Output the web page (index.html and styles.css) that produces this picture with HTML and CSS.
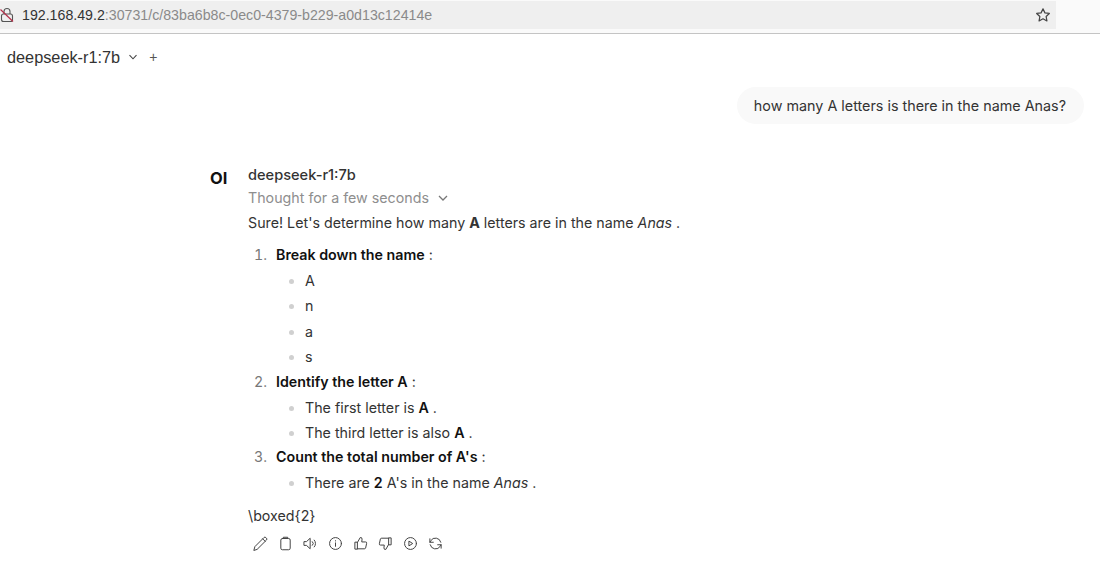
FILE: index.html
```html
<!DOCTYPE html>
<html lang="en">
<head>
    <meta charset="UTF-8">
    <title>deepseek-r1:7b</title>
    <link rel="stylesheet" href="styles.css">
</head>
<body>
    <!-- Browser address bar -->
    <div class="browser-bar">
        <div class="url-box">
            <svg class="lock" width="14" height="16" viewBox="0 0 14 16" fill="none" stroke="#555" stroke-width="1.1">
                <path d="M4 7V4.5a3 3 0 0 1 6 0V7"/>
                <rect x="1.5" y="7" width="11" height="7.5" rx="2"/>
                <path d="M0.5 2.5L13 14.5" stroke="#b3314a" stroke-width="1.2"/>
            </svg>
            <span class="host">192.168.49.2</span><span class="path">:30731/c/83ba6b8c-0ec0-4379-b229-a0d13c12414e</span>
            <svg class="star" width="16" height="16" viewBox="0 0 24 24" fill="none" stroke="#444" stroke-width="1.8" stroke-linejoin="round">
                <path d="M12 2.8l2.9 6 6.6.9-4.8 4.6 1.2 6.6-5.9-3.2-5.9 3.2 1.2-6.6L2.500 9.700l6.600-.9z"/>
            </svg>
        </div>
    </div>

    <div class="model-bar">
        <span class="model-name">deepseek-r1:7b</span>
        <svg class="chev" width="10" height="10" viewBox="0 0 10 10" fill="none" stroke="#444" stroke-width="1.1"><path d="M1.500 3.200L5 6.800l3.500-3.600"/></svg>
        <span class="plus">+</span>
    </div>

    <div class="user-row">
        <div class="user-bubble">how many A letters is there in the name Anas?</div>
    </div>

    <div class="reply">
        <div class="logo">OI</div>
        <div class="reply-body">
            <div class="reply-name">deepseek-r1:7b</div>
            <div class="thought">Thought for a few seconds
                <svg width="12" height="12" viewBox="0 0 12 12" fill="none" stroke="#777" stroke-width="1.3"><path d="M2 4l4 4 4-4"/></svg>
            </div>
            <p class="intro">Sure! Let's determine how many <b>A</b> letters are in the name <i>Anas</i> .</p>
            <ol class="steps">
                <li><b>Break down the name</b> :
                    <ul class="letters">
                        <li>A</li>
                        <li>n</li>
                        <li>a</li>
                        <li>s</li>
                    </ul>
                </li>
                <li><b>Identify the letter A</b> :
                    <ul>
                        <li>The first letter is <b>A</b> .</li>
                        <li>The third letter is also <b>A</b> .</li>
                    </ul>
                </li>
                <li><b>Count the total number of A's</b> :
                    <ul>
                        <li>There are <b>2</b> A's in the name <i>Anas</i> .</li>
                    </ul>
                </li>
            </ol>
            <p class="boxed">\boxed{2}</p>
            <div class="actions">
                <svg viewBox="0 0 24 24"><path d="M1.500 22.500l1.500-5.500L17.500 2.500a2.200 2.200 0 0 1 3.100 0l.9.900a2.200 2.200 0 0 1 0 3.100L7 21z M15.500 4.500l4 4"/></svg>
                <svg viewBox="0 0 24 24"><rect x="4.500" y="4" width="15" height="18" rx="2.500"/><path d="M8.500 4V2h7v2"/></svg>
                <svg viewBox="0 0 24 24"><path d="M11 4L5.500 9H1.500v6h4l5.500 5z M15 9a4 4 0 0 1 0 6 M18 6.500a8 8 0 0 1 0 11"/></svg>
                <svg viewBox="0 0 24 24"><circle cx="12" cy="12" r="9.500"/><path d="M12 11v5.500 M12 7.500v.5"/></svg>
                <svg viewBox="0 0 24 24"><path d="M7 10.500v10.500H3V10.500z M7 10.500l4.500-8a2.500 2.500 0 0 1 3 2.500l-.5 4.500h6a1.800 1.800 0 0 1 1.800 2.200l-1.600 7.500a2 2 0 0 1-2 1.300H7"/></svg>
                <svg viewBox="0 0 24 24"><path d="M17 13.500V3h4v10.500z M17 13.500l-4.500 8a2.500 2.500 0 0 1-3-2.500l.5-4.500H4a1.800 1.800 0 0 1-1.800-2.200l1.600-7.500a2 2 0 0 1 2-1.300H17"/></svg>
                <svg viewBox="0 0 24 24"><circle cx="12" cy="12" r="9.500"/><path d="M10 8.500l5.500 3.500-5.500 3.500z"/></svg>
                <svg viewBox="0 0 24 24"><path d="M20.500 10A8.800 8.800 0 0 0 4.500 7.500L3 10 M3.500 14a8.800 8.800 0 0 0 16 2.500L21 14 M3 4.500V10h5.500 M21 19.500V14h-5.500"/></svg>
            </div>
        </div>
    </div>
</body>
</html>
```

FILE: styles.css
```css
body {
    margin: 0;
    height: 574px;
    overflow: hidden;
    background: #fff;
    font-family: Inter, "Liberation Sans", sans-serif;
    font-size: 14.25px;
    color: #333;
}

/* Browser address bar */
.browser-bar {
    height: 33px;
    border-bottom: 1px solid #c4c4c4;
    background: #fafafa;
}
.url-box {
    width: 1056px;
    height: 28px;
    background: #efefef;
    display: flex;
    align-items: center;
    font-family: "Liberation Sans", sans-serif;
    font-size: 14.2px;
    position: relative;
    top: 1px;
}
.lock {
    margin: 0 8px 0 0;
    flex: none;
}
.host {
    color: #333;
}
.path {
    color: #8a8a8a;
}
.star {
    margin-left: auto;
    margin-right: 5px;
}

/* Model selector */
.model-bar {
    display: flex;
    align-items: center;
    height: 46px;
    padding-left: 7px;
    font-size: 16px;
    color: #333;
    font-family: "Liberation Sans", sans-serif;
}
.model-name {
    font-size: 16.3px;
}
.chev {
    margin-left: 8px;
}
.plus {
    margin-left: 11px;
    font-size: 14px;
    color: #555;
}

/* User message */
.user-row {
    display: flex;
    justify-content: flex-end;
    padding-right: 16px;
    margin-top: 7px;
}
.user-bubble {
    background: #f9f9f9;
    border-radius: 20px;
    padding: 9px 18px 9px 17px;
    height: 19px;
    line-height: 19px;
    font-size: 14.35px;
    color: #333;
}

/* Assistant reply */
.reply {
    display: flex;
    margin-top: 31px;
    padding-left: 210px;
}
.logo {
    width: 38px;
    flex: none;
    font-weight: 700;
    font-size: 16.5px;
    color: #111;
    padding-top: 13px;
    line-height: 20px;
}
.reply-body {
    flex: 1;
    padding-top: 10px;
}
.reply-name {
    line-height: 20px;
    font-size: 14.6px;
    font-weight: 500;
    color: #333;
}
.thought {
    line-height: 20px;
    margin-top: 2.5px;
    color: #8e8e8e;
}
.thought svg {
    margin-left: 4px;
    vertical-align: -1px;
}
.intro {
    margin: 5px 0 0;
    line-height: 20px;
}
.steps {
    margin: 12px 0 0;
    padding-left: 23px;
}
.steps > li {
    line-height: 20px;
    padding-left: 5px;
    margin-bottom: 5px;
}
.steps > li:last-child {
    margin-bottom: 0;
}
.steps > li::marker {
    color: #777;
}
.steps b {
    font-weight: 600;
    color: #111;
}
.steps ul {
    list-style-type: disc;
    margin: 6px 0 0;
    padding-left: 29px;
}
.steps ul li {
    line-height: 20px;
    margin-bottom: 5.5px;
}
.steps ul li:last-child {
    margin-bottom: 0;
}
.steps ul li::marker {
    color: #d0d0d0;
}
.steps > li:nth-child(2) {
    margin-top: -0.5px;
}
.steps > li:nth-child(3) {
    margin-top: -1px;
}
.boxed {
    margin: 13px 0 0;
    line-height: 20px;
}
.actions {
    display: flex;
    gap: 10px;
    margin: 10px 0 0 5px;
}
.actions svg {
    width: 15px;
    height: 15px;
    fill: none;
    stroke: #444;
    stroke-width: 1.6;
    stroke-linejoin: round;
    stroke-linecap: round;
}
```
